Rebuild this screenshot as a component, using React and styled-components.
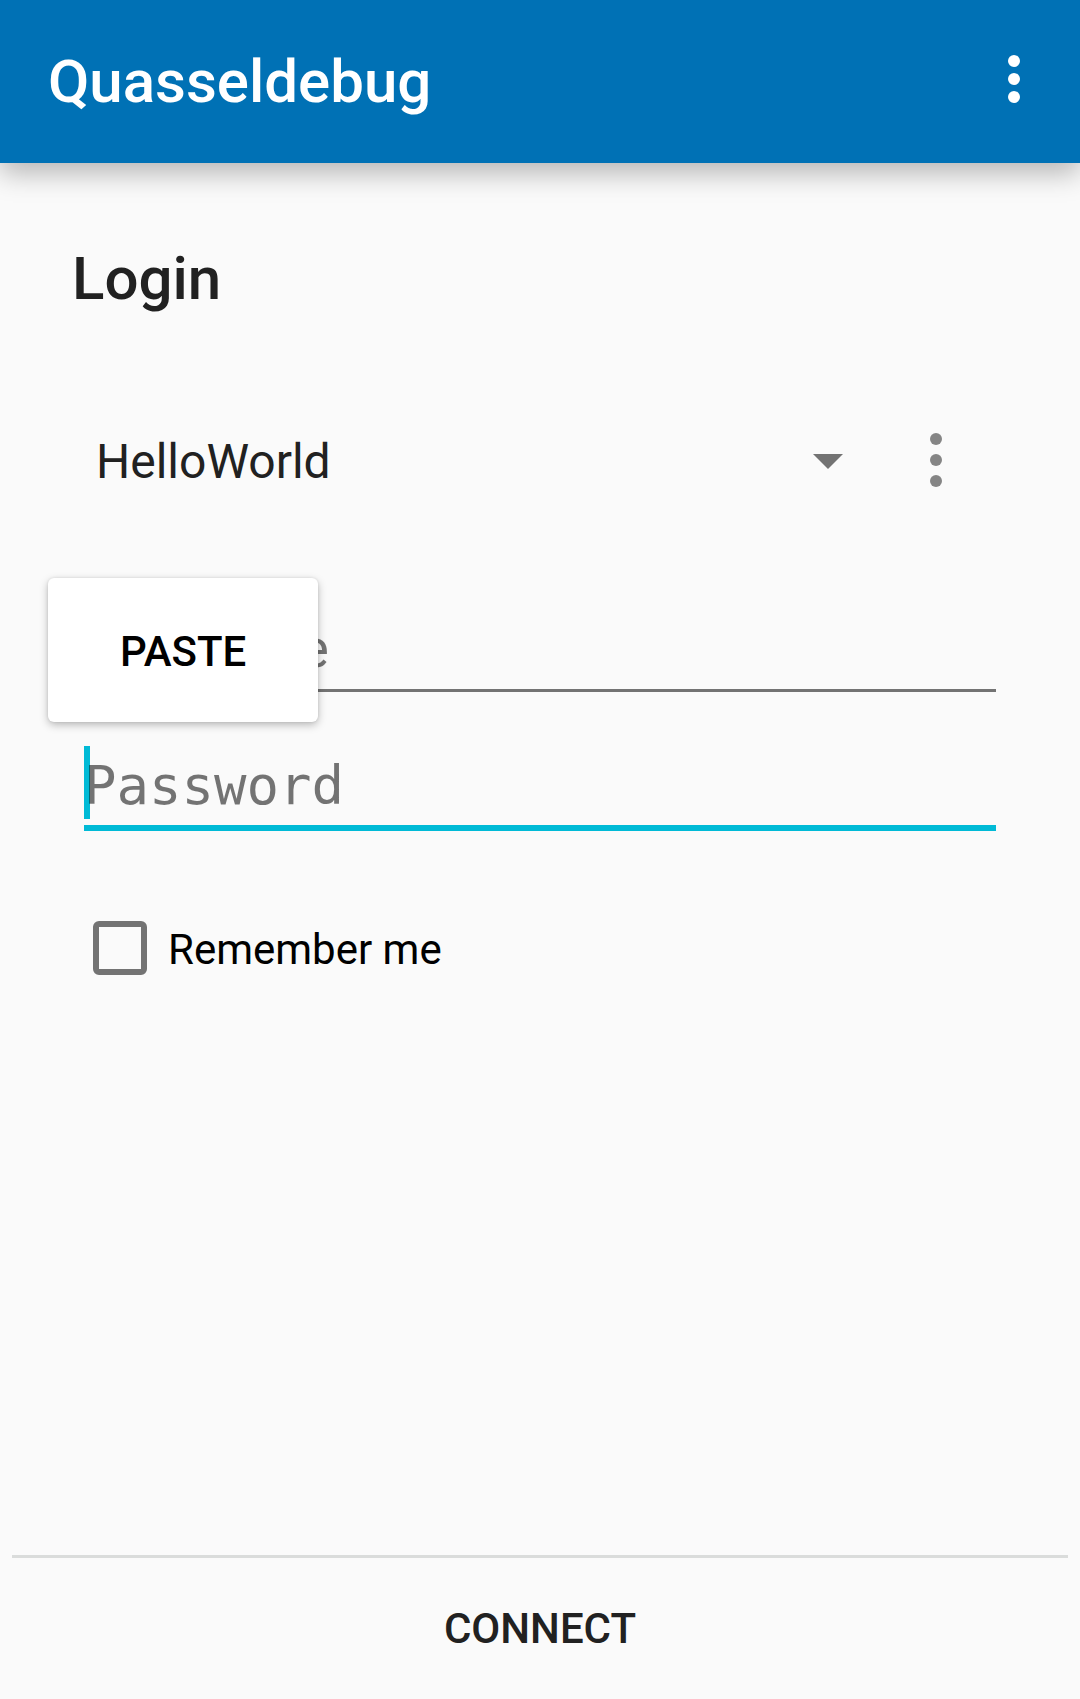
import React from "react";
import styled, { createGlobalStyle } from "styled-components";

const GlobalStyle = createGlobalStyle`
  *, *::before, *::after { box-sizing: border-box; }
  body {
    margin: 0;
    background: #fafafa;
    color: #212121;
    font-family: Roboto, "Liberation Sans", sans-serif;
  }
`;

const Page = styled.div`
  display: flex;
  flex-direction: column;
  min-height: 100vh;
  overflow-x: hidden;
`;

const AppBar = styled.header`
  position: relative;
  z-index: 1;
  display: flex;
  align-items: center;
  justify-content: space-between;
  padding: 0 30px 0 48px;
  height: 163px;
  background: #0071b5;
  color: #fff;
  box-shadow: 0 10px 26px rgba(0, 0, 0, 0.28);
`;

const Title = styled.h1`
  margin: 0;
  font-size: 60px;
  line-height: 72px;
  font-weight: 500;
`;

const IconButton = styled.button`
  display: flex;
  justify-content: center;
  width: 72px;
  padding: 0;
  border: 0;
  background: none;
  color: ${(p) => p.$color};
`;

const Main = styled.main`
  flex: 1;
  padding: 80px 72px;
`;

const Heading = styled.h2`
  margin: 0 0 96px;
  font-size: 60px;
  line-height: 72px;
  font-weight: 500;
`;

const AccountRow = styled.div`
  display: flex;
  align-items: center;
  height: 100px;
  margin-bottom: 96px;
  padding: 0 36px 0 24px;
`;

const Spinner = styled.div`
  position: relative;
  display: flex;
  align-items: center;
  flex: 1;
  margin-right: 36px;
`;

const Select = styled.select`
  appearance: none;
  width: 100%;
  height: 100px;
  padding: 0;
  border: 0;
  outline: 0;
  background: none;
  color: #212121;
  font-family: inherit;
  font-size: 48px;
`;

const Arrow = styled.svg`
  position: absolute;
  right: 21px;
  pointer-events: none;
`;

const Fields = styled.div`
  display: flex;
  flex-direction: column;
  gap: 54px;
  padding: 0 12px;
`;

const Field = styled.div`
  position: relative;
  display: flex;
`;

const Input = styled.input`
  position: relative;
  width: 100%;
  height: 85px;
  padding: 0;
  border: 0;
  border-bottom: ${(p) => (p.$active ? "6px solid #00bad6" : "3px solid #737373")};
  border-radius: 0;
  outline: 0;
  background: none;
  color: #212121;
  font-family: ${(p) =>
    p.$mono ? '"Droid Sans Mono", "DejaVu Sans Mono", monospace' : "inherit"};
  font-size: 54px;

  &::placeholder {
    color: rgba(0, 0, 0, 0.54);
    opacity: 1;
  }
`;

const Caret = styled.span`
  position: absolute;
  top: 0;
  left: 0;
  width: 6px;
  height: 73px;
  background: #00bad6;
`;

const PasteButton = styled.button`
  position: absolute;
  z-index: 1;
  top: -29px;
  left: -36px;
  height: 144px;
  padding: 2px 72px 0;
  border: 0;
  border-radius: 6px;
  background: #fff;
  color: #000;
  font-family: inherit;
  font-size: 42px;
  font-weight: 500;
  box-shadow: 0 3px 8px rgba(0, 0, 0, 0.26), 0 0 3px rgba(0, 0, 0, 0.1);
`;

const Remember = styled.label`
  display: flex;
  align-items: flex-start;
  gap: 21px;
  margin-top: 90px;
  padding-left: 21px;
  color: #000;
  font-size: 42px;
  line-height: 58px;
`;

const Checkbox = styled.input`
  appearance: none;
  width: 54px;
  height: 54px;
  margin: 0;
  border: 6px solid #737373;
  border-radius: 6px;

  &:checked {
    background: #00bad6;
  }
`;

const Footer = styled.footer`
  margin: 0 12px;
  border-top: 3px solid #dadcdb;
`;

const ConnectButton = styled.button`
  display: block;
  width: 100%;
  height: 141px;
  padding: 0;
  border: 0;
  background: none;
  color: #212121;
  font-family: inherit;
  font-size: 42px;
  font-weight: 500;
`;

function Dots({ middle, spacing }) {
  return (
    <svg width="12" height="60" viewBox="0 0 12 60" fill="currentColor" aria-hidden="true">
      <circle cx="6" cy={middle - spacing} r="6" />
      <circle cx="6" cy={middle} r="6" />
      <circle cx="6" cy={middle + spacing} r="6" />
    </svg>
  );
}

export default function App() {
  return (
    <Page>
      <GlobalStyle />
      <AppBar>
        <Title>Quasseldebug</Title>
        <IconButton type="button" $color="#fff" aria-label="More options">
          <Dots middle={27} spacing={18} />
        </IconButton>
      </AppBar>
      <Main>
        <Heading>Login</Heading>
        <AccountRow>
          <Spinner>
            <Select aria-label="Account" defaultValue="HelloWorld">
              <option>HelloWorld</option>
            </Select>
            <Arrow width="30" height="15" viewBox="0 0 30 15" aria-hidden="true">
              <path d="M0 0H30L15 15Z" fill="#737373" />
            </Arrow>
          </Spinner>
          <IconButton type="button" $color="#858585" aria-label="Account options">
            <Dots middle={29} spacing={21} />
          </IconButton>
        </AccountRow>
        <Fields>
          <Field>
            <Input type="text" placeholder="Username" aria-label="Username" />
            <PasteButton type="button">PASTE</PasteButton>
          </Field>
          <Field>
            <Caret />
            <Input type="password" placeholder="Password" aria-label="Password" $active $mono />
          </Field>
        </Fields>
        <Remember>
          <Checkbox type="checkbox" />
          Remember me
        </Remember>
      </Main>
      <Footer>
        <ConnectButton type="button">CONNECT</ConnectButton>
      </Footer>
    </Page>
  );
}
